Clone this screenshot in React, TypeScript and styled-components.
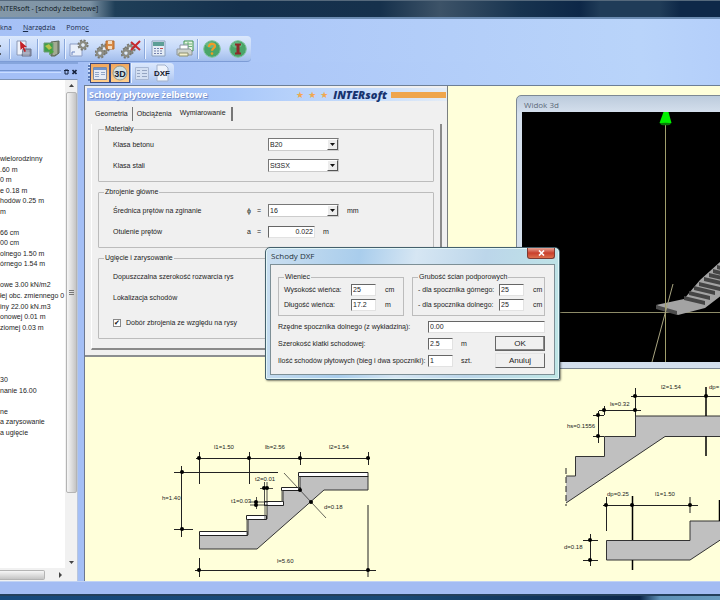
import React from "react";
import styled, { createGlobalStyle, css } from "styled-components";

const UI = `"Liberation Sans", Arial, sans-serif`;
const SEGOE = `"Open Sans", "Noto Sans", sans-serif`;

const GlobalStyle = createGlobalStyle`
  * { box-sizing: border-box; }
  body { margin: 0; overflow: hidden; }
  button, input, select, fieldset, legend { font: inherit; color: inherit; }
`;

const Page = styled.div`
  display: flex;
  flex-direction: column;
  height: 100vh;
  overflow: hidden;
  background: #a4bff6;
  color: #1c1c1c;
  font: 7px/10px ${UI};
  white-space: nowrap;
`;

const TitleBar = styled.header`
  flex: none;
  height: 19px;
  padding-top: 2px;
  border-top: 1px solid #55697c;
  border-bottom: 2px solid #6c8cb2;
  background: linear-gradient(90deg, #8498a8 0, #7d93a5 90px, #1f3f58 115px, #14304d 240px, #16314c 380px, #3d5368 440px, #17334f 520px, #0d2747 580px, #203c58 600px, #203c58 660px, #0e2848 680px);
  font: 7px/12px ${SEGOE};
  color: #0c1620;
`;

const Chrome = styled.div`
  flex: none;
  background: linear-gradient(90deg, #a6c1f6 0, #adc8f8 260px, #b9d4fa 640px, #b4cffa);
`;

const MenuBar = styled.nav`
  display: flex;
  gap: 11px;
  height: 17px;
  font: 7px/16px ${SEGOE};
  color: #1a2a48;
`;

const MenuItem = styled.button`
  padding: 0;
  border: 0;
  background: none;
`;

const ToolBar = styled.div`
  display: flex;
  align-items: center;
  width: 251px;
  height: 26px;
  border-radius: 0 4px 4px 0;
  border-bottom: 1px solid #7d9cd6;
  background: linear-gradient(#dbe8fc, #c6d9f9 50%, #a2bdec);
`;

const ToolButton = styled.button`
  display: flex;
  justify-content: center;
  width: 26px;
  padding: 0;
  border: 0;
  background: none;
`;

const ToolSep = styled.span`
  width: 2px;
  height: 20px;
  border-left: 1px solid #8aa8dc;
  border-right: 1px solid #eaf2ff;
`;

const Body = styled.div`
  flex: 1;
  display: flex;
  min-height: 0;
`;

const SidePanel = styled.aside`
  flex: none;
  display: flex;
  flex-direction: column;
  width: 78px;
  border-top: 2px solid #86a5dc;
  overflow: hidden;
`;

const SideHeader = styled.div`
  display: flex;
  align-items: center;
  gap: 3px;
  height: 15px;
`;

const SideRule = styled.span`
  width: 61px;
  height: 3px;
  border-top: 1px solid #7393cf;
  border-bottom: 1px solid #c8dcff;
`;

const SideButton = styled.button`
  display: flex;
  padding: 0;
  border: 0;
  background: none;
`;

const TreeArea = styled.div`
  flex: 1;
  display: grid;
  grid-template-columns: 65px 12px;
  grid-template-rows: 1fr 13px;
  min-height: 0;
  background: #fff;
  border-right: 1px solid #b9c6dc;
  border-top: 1px solid #7f93b4;
`;

const Tree = styled.ul`
  display: grid;
  grid-auto-rows: 1fr;
  align-items: center;
  height: 284px;
  margin: 74px 0 0;
  padding: 0;
  list-style: none;
`;

const VScroll = styled.div`
  display: flex;
  flex-direction: column;
  align-items: center;
  justify-content: space-between;
  background: #f1f1f1;
`;

const VThumb = styled.div`
  flex: 1;
  display: flex;
  align-items: center;
  justify-content: center;
  width: 11px;
  margin-bottom: 63px;
  border: 1px solid #b4b4b4;
  border-radius: 2px;
  background: linear-gradient(90deg, #f6f6f6, #dedede 50%, #c4c4c4);
`;

const HScroll = styled.div`
  grid-column: 1 / 3;
  display: flex;
  align-items: center;
  gap: 12px;
  background: #f1f1f1;
`;

const HThumb = styled.div`
  width: 45px;
  height: 10px;
  border: 1px solid #b4b4b4;
  border-left: 0;
  border-radius: 0 2px 2px 0;
  background: linear-gradient(#f6f6f6, #dedede 50%, #c4c4c4);
`;

const Main = styled.main`
  flex: 1;
  display: flex;
  flex-direction: column;
  min-width: 0;
  margin-left: 6px;
`;

const ViewBarRow = styled.div`
  flex: none;
  height: 23px;
  padding: 1px 0 0 4px;
  background: linear-gradient(90deg, #a6c1f6 0, #adc8f8 200px, #b9d4fa 560px, #b4cffa);
`;

const ViewBar = styled.div`
  display: flex;
  align-items: center;
  width: 86px;
  height: 20px;
  border-radius: 4px;
  background: linear-gradient(#dbe8fc, #c6d9f9 50%, #a9c2ee);
`;

const Grip = styled.span`
  width: 2px;
  height: 16px;
  border-left: 2px dotted #5c7cb8;
`;

const ViewButton = styled.button<{ $active?: boolean }>`
  display: flex;
  align-items: center;
  justify-content: center;
  width: 20px;
  height: 20px;
  padding: 0;
  border: 1px solid transparent;
  background: none;
  ${(p) =>
    p.$active &&
    css`
      border-color: #3c4a80;
      background: linear-gradient(#f2a75c, #ffcf8e);
    `}
`;

const Canvas = styled.div`
  position: relative;
  flex: 1;
  overflow: hidden;
  border-left: 1px solid #6c7890;
  border-top: 1px solid #6d7f96;
  background: #ffffda;
`;

const FormWindow = styled.section`
  position: absolute;
  left: 0;
  top: 0;
  width: 363px;
  padding: 2px 0 5px 2px;
  border-right: 1px solid #7a7f80;
  border-bottom: 2px solid #8b8e90;
  background: #f0f0f0;
`;

const Banner = styled.div`
  display: flex;
  align-items: center;
  height: 13px;
  padding-left: 2px;
  background: linear-gradient(90deg, #9db9f6, #a9c8fa 40%, #c9defb 80%, #e4ecf6);
`;

const BannerTitle = styled.h1`
  flex: 1;
  margin: 0;
  font: bold 9px/13px "Noto Sans", sans-serif;
  color: #fff;
  text-shadow: 1px 1px 1px #6a86c4;
`;

const Stars = styled.span`
  display: flex;
  gap: 4px;
  margin-right: 5px;
  font: 9px/12px "DejaVu Sans", sans-serif;
  color: #f0a850;
`;

const Brand = styled.strong`
  font: italic 800 11px/12px "Open Sans", sans-serif;
  color: #17336f;
`;

const BrandBar = styled.span`
  width: 55px;
  height: 6px;
  margin: 0 1px 0 4px;
  background: #efa54c;
`;

const Tabs = styled.div`
  display: flex;
  align-items: center;
  height: 23px;
  padding: 3px 0 0 8px;
`;

const Tab = styled.button<{ $kind: "divided" | "plain" | "active" }>`
  height: 14px;
  border: 0;
  background: none;
  line-height: 12px;
  ${(p) =>
    p.$kind === "divided"
      ? css`
          margin-right: 4px;
          padding: 0 4px 0 0;
          border-right: 1px solid #777;
        `
      : p.$kind === "active"
      ? css`
          padding: 0 5px 2px 8px;
          border-right: 2px solid #777;
        `
      : css`
          padding: 0;
        `}
`;

const TabPage = styled.form`
  display: flex;
  flex-direction: column;
  gap: 5px;
  width: 351px;
  margin-left: 4px;
  padding: 0 6px 9px;
  border-left: 1px solid #fff;
  border-right: 2px solid #8a8a8a;
  border-bottom: 2px solid #8a8a8a;
`;

const Group = styled.fieldset<{ $lead?: boolean }>`
  min-width: 0;
  margin: 0;
  padding: ${(p) => (p.$lead ? "3px" : "0")} 5px 5px;
  border: 1px solid #bcbcbc;
  border-radius: 1px;
`;

const GroupTitle = styled.legend`
  padding: 0 1px;
  line-height: 10px;
`;

const Row = styled.div`
  display: grid;
  grid-template-columns: 134px 10px 11px auto 1fr;
  align-items: center;
  height: 21px;
  padding-left: 9px;
`;

const SelectBox = styled.span`
  display: flex;
  align-items: center;
  width: 71px;
  height: 13px;
  border: 1px solid #777;
  border-right-color: #ccc;
  border-bottom-color: #ccc;
  background: #fff;
`;

const Select = styled.select`
  flex: 1;
  height: 11px;
  padding: 0 1px;
  border: 0;
  appearance: none;
  background: transparent;
  line-height: 11px;
`;

const DropArrow = styled.svg`
  width: 11px;
  height: 11px;
  border: 1px solid;
  border-color: #fff #555 #555 #fff;
  background: #ececec;
`;

const Input = styled.input<{ $w?: string; $right?: boolean }>`
  width: ${(p) => p.$w || "25px"};
  height: 12px;
  padding: 0 1px;
  border: 1px solid #e2e2e2;
  border-top-color: #666;
  border-left-color: #666;
  border-radius: 0;
  background: #fff;
  line-height: 10px;
  text-align: ${(p) => (p.$right ? "right" : "left")};
`;

const Unit = styled.span`
  padding-left: 8px;
`;

const CheckRow = styled.label`
  display: flex;
  align-items: center;
  gap: 5px;
  height: 21px;
  margin-top: 4px;
  padding-left: 9px;
`;

const Check = styled.input`
  display: flex;
  align-items: center;
  justify-content: center;
  appearance: none;
  width: 8px;
  height: 8px;
  margin: 0;
  border: 1px solid #888;
  background: #fff;
  &:checked::before {
    content: "✔";
    font: 7px/6px "DejaVu Sans", sans-serif;
    color: #111;
  }
`;

const ViewWindow = styled.section`
  position: absolute;
  left: 431px;
  right: -8px;
  top: 9px;
  padding: 0 5px 6px;
  border: 1px solid #7c8894;
  border-radius: 5px 5px 0 0;
  background: linear-gradient(#bccbdc, #d6e1ee 18px, #d3dfec);
`;

const ViewTitle = styled.h2`
  margin: 0;
  padding: 1px 0 0 2px;
  font: 8px/15px ${SEGOE};
  color: #5c6a78;
`;

const Scene = styled.svg`
  display: block;
  width: 100%;
  height: 250px;
  background: #000;
`;

const Dialog = styled.section`
  position: absolute;
  left: 180px;
  top: 161px;
  width: 295px;
  padding: 0 4px 4px;
  border: 1px solid #44606c;
  border-radius: 5px 5px 2px 2px;
  background: linear-gradient(100deg, #cbdff0 0, #a9cdec 30%, #d6e6f3 48%, #bcd6ea 70%, #bfe6e6);
  box-shadow: 1px 1px 2px rgba(0, 0, 0, 0.5), inset 0 0 0 1px #e2f6f8;
`;

const DialogTitle = styled.header`
  display: flex;
  align-items: flex-start;
  justify-content: space-between;
  height: 16px;
`;

const DialogName = styled.h2`
  margin: 0;
  padding-left: 1px;
  font: 8px/16px ${SEGOE};
  color: #26323c;
`;

const Close = styled.button`
  display: flex;
  align-items: center;
  justify-content: center;
  width: 28px;
  height: 11px;
  padding: 0;
  border: 1px solid #7c3a32;
  border-top: 0;
  border-radius: 0 0 3px 3px;
  background: linear-gradient(#e9a596, #c9402c 50%, #dd6f4c);
`;

const DialogBody = styled.form`
  padding: 7px 9px 5px 7px;
  border: 1px solid #7d8f96;
  background: #f0f0f0;
`;

const Groups = styled.div`
  display: grid;
  grid-template-columns: 126px 1fr;
  gap: 8px;
`;

const DGroup = styled.fieldset`
  min-width: 0;
  margin: 0;
  padding: 0 5px 3px;
  border: 1px solid #bcbcbc;
`;

const DRow = styled.div<{ $label: string }>`
  display: grid;
  grid-template-columns: ${(p) => p.$label} 26px auto;
  align-items: center;
  height: 15px;
`;

const Bottom = styled.div`
  display: grid;
  grid-template-columns: 150px 25px 1fr 50px;
  grid-auto-rows: 17px;
  align-items: center;
  margin-top: 2px;
`;

const Wide = styled.div`
  grid-column: 2 / 5;
  display: flex;
`;

const Push = styled.button<{ $default?: boolean }>`
  height: 15px;
  padding: 0;
  border: 1px solid;
  border-color: ${(p) => (p.$default ? "#666" : "#e4e4e4 #666 #666 #e4e4e4")};
  border-radius: 0;
  background: #f0f0f0;
  box-shadow: ${(p) => (p.$default ? "inset -1px -1px 0 #888" : "none")};
  font-size: 8px;
  line-height: 12px;
`;

const Drawing = styled.svg<{ $x: number; $y: number }>`
  position: absolute;
  left: ${(p) => p.$x}px;
  top: ${(p) => p.$y}px;
  font: 6px "Liberation Sans", sans-serif;
`;

const StatusBar = styled.footer`
  flex: none;
  height: 13px;
  border-top: 1px solid #c2d3f4;
  background: #a3bcf3;
`;

const Desktop = styled.div`
  flex: none;
  height: 6px;
  border-top: 2px solid #24405c;
  background: linear-gradient(90deg, #17497c 0, #1a4a76 400px, #0c2749 640px, #5f92b8 660px, #6a9cc0);
`;

const treeLines = [
  "wielorodzinny", ".60 m", "0 m", "e 0.18 m", "hodów 0.25 m", "m", "",
  "66 cm", "00 cm", "olnego 1.50 m", "órnego 1.54 m", "",
  "owe 3.00 kN/m2", "łej obc. zmiennego 0", "iny 22.00 kN.m3", "onowej 0.01 m",
  "ziomej 0.03 m", "", "", "", "", "30", "nanie 16.00", "", "ne", "a zarysowanie", "a ugięcie",
];

function Gear({ x, y }: { x: number; y: number }) {
  return (
    <g transform={`translate(${x} ${y})`}>
      <circle r="4.4" fill="none" stroke="#77776f" strokeWidth="2.4" strokeDasharray="2 1.45" />
      <circle r="3" fill="none" stroke="#8c8c82" strokeWidth="2.4" />
      <circle r="1.4" fill="#e6ecf2" />
    </g>
  );
}

function ToolIcon({ name }: { name: string }) {
  return (
    <svg width="20" height="20" viewBox="0 0 20 20">
      {name === "select" && (
        <g>
          <path d="M3 2h9v14H3z" fill="#eef2fa" stroke="#8b98b4" />
          <path d="M9 10h8v7H8z" fill="#8d93a6" stroke="#6a7088" />
          <path d="M10 11v6M12 11v6M14 11v6M8 14h8" stroke="#c9cedb" strokeWidth=".6" />
          <path d="M6 2l7 6-3 .3 2 4-1.600.8-1.700-4L6.500 11z" fill="#c32027" />
        </g>
      )}
      {name === "book" && (
        <g>
          <path d="M9 3l8-1v12l-4 3H9z" fill="#7f8a76" stroke="#5b6656" />
          <path d="M14 3v12M12 3v13" stroke="#c8ccb0" />
          <path d="M2 4h9v9H2z" fill="#3fa04a" stroke="#6f9a74" />
          <path d="M3 7l4-2 3 4-3 2z" fill="#b9c24a" />
          <path d="M8 10l4 3-5 3z" fill="#4aa53f" />
        </g>
      )}
      {name === "new" && (
        <g>
          <path d="M1 5h9l3 3v9H1z" fill="#e9effa" stroke="#8b9cc4" />
          <path d="M3 16v-3h3" fill="none" stroke="#6b84c0" />
          <Gear x={14} y={6} />
        </g>
      )}
      {name === "save" && (
        <g>
          <Gear x={9} y={10} />
          <Gear x={5} y={14} />
          <path d="M11 2h8v8h-8z" fill="#d98a45" stroke="#b46a2c" />
          <path d="M13 2h4v3h-4zM13 7h4v3h-4z" fill="#f4dcc0" />
        </g>
      )}
      {name === "delete" && (
        <g>
          <Gear x={9} y={10} />
          <Gear x={5} y={14} />
          <path d="M10 3l9 8M19 2l-9 9" stroke="#c62a2e" strokeWidth="2" />
        </g>
      )}
      {name === "calc" && (
        <g>
          <path d="M3 2h13v15H3z" fill="#e4ecf6" stroke="#8ba0bc" />
          <path d="M4 3h11v4H4z" fill="#5d9e96" />
          <path d="M5 9.500h9M5 12h9M5 14.500h9" stroke="#7381ad" strokeDasharray="2 1" />
          <path d="M11 9.500h3" stroke="#c05050" />
        </g>
      )}
      {name === "print" && (
        <g>
          <path d="M9 2h9v10H9z" fill="#e8f4e6" stroke="#3f9450" />
          <path d="M10 5h7M10 7.500h7M13 3v8" stroke="#4ca35c" strokeWidth=".8" />
          <path d="M5 6h8v5H5z" fill="#fff" stroke="#8a94a4" />
          <path d="M2 10h13l2 2v4H2z" fill="#cdd2cc" stroke="#8d9599" />
          <path d="M4 14h9v3H4z" fill="#f4f0cc" stroke="#8d9070" />
        </g>
      )}
      {(name === "help" || name === "info") && (
        <g>
          <circle cx="10" cy="10" r="8.300" fill="#4aa56a" stroke="#7fc49a" />
          <ellipse cx="9" cy="6" rx="5" ry="3" fill="#7cc795" opacity=".6" />
          {name === "help" ? (
            <g>
              <path d="M7 8c0-4 6-4 6-.8 0 2-3 2-3 4.600" fill="none" stroke="#f09a26" strokeWidth="2.200" />
              <circle cx="10" cy="14.600" r="1.300" fill="#f09a26" />
            </g>
          ) : (
            <path d="M7 4.500h6v2h-1.500v7H13v2H7v-2h1.500v-7H7z" fill="#8d2a2a" />
          )}
        </g>
      )}
    </svg>
  );
}

const tools = ["|", "select", "|", "book", "|", "new", "save", "delete", "|", "calc", "print", "|", "help", "info"];

function Arrow({ d }: { d: string }) {
  return (
    <svg width="7" height="12" viewBox="0 0 7 12">
      <path d={d} fill="#444" />
    </svg>
  );
}

function Combo({ id, value }: { id: string; value: string }) {
  return (
    <SelectBox>
      <Select id={id} defaultValue={value}>
        <option>{value}</option>
      </Select>
      <DropArrow viewBox="0 0 9 9" aria-hidden="true">
        <path d="M2 3h5L4.500 6z" fill="#111" />
      </DropArrow>
    </SelectBox>
  );
}

function Dots({ points }: { points: number[][] }) {
  return (
    <g fill="#000" stroke="none">
      {points.map(([x, y]) => (
        <circle key={`${x}-${y}`} cx={x} cy={y} r="2" />
      ))}
    </g>
  );
}

function StairSection() {
  return (
    <Drawing $x={75} $y={354} width="220" height="145" viewBox="160 440 220 145">
      <path d="M199.500 535H248V519H267V505H283V490H300V476H368V490H324L257 549H199.500z" fill="#c0c0c0" stroke="#333" />
      <path
        d="M199.500 531.500H247.500V535.500H199.500zM246.500 515.500H266.500V519.500H246.500zM264.500 501.500H283.500V505.500H264.500zM281.500 487.500H300.500V490.500H281.500zM298.500 472.500H368V476.500H298.500z"
        fill="#fff"
        stroke="#222"
      />
      <path d="M247 519V535M265 505V519M282 490V502M298.500 476V488" stroke="#555" fill="none" />
      <g stroke="#222" fill="none">
        <path d="M196 458.500H370M199.500 452V484M249.500 452V484M300.500 452V465M368.500 452V465" />
        <path d="M181.500 466V537M174 472.500H278M174 529.500H193" />
        <path d="M264.500 482V506M267 482V506M260 488.500H273M250 502H268M250 505H268M256.500 497V509" strokeWidth=".8" />
        <path d="M284 473L326 518" strokeWidth=".7" />
        <path d="M195 570.500H376M199.500 558V577M368 505V577" />
      </g>
      <Dots points={[[199, 458], [249, 458], [300, 458], [368, 458], [182, 472], [182, 529], [264, 488], [267, 488], [256, 502], [256, 505], [300, 490], [311, 502], [199, 570], [368, 570]]} />
      <g fill="#222">
        <text x="214" y="449">l1=1.50</text>
        <text x="265" y="449">lb=2.56</text>
        <text x="329" y="449">l2=1.54</text>
        <text x="162" y="500">h=1.40</text>
        <text x="255" y="481">t2=0.01</text>
        <text x="231" y="503">t1=0.03</text>
        <text x="324" y="509">d=0.18</text>
        <text x="277" y="563">l=5.60</text>
      </g>
    </Drawing>
  );
}

function StairDetails() {
  return (
    <Drawing $x={475} $y={294} width="190" height="200" viewBox="560 380 190 200">
      <path d="M566 503V476H575V456.500H605V436.500H635.500V416H752V436.500H665z" fill="#c0c0c0" />
      <path d="M566 476H575.500V456.500H604.500V436.500H635.500V416H752M752 436.500H665L566 503" fill="none" stroke="#333" />
      <path d="M566 468V506" stroke="#222" strokeDasharray="6 3" />
      <path d="M606.500 540.500H690V521H752V519L690 560H606.500z" fill="#c0c0c0" stroke="#333" />
      <g stroke="#222" fill="none">
        <path d="M631 396.500H752M635.500 388V416M599 410.500H641M604.500 406V415M598.500 411V443M593 415.500H604M593 436.500H604" />
        <path d="M603 505.500H698M606.500 497V531M690 497V513M590.500 534V566M583 540.500H598M583 560.500H598" />
      </g>
      <path d="M706 387V416M706 436V456M632.500 496V540M632.500 560V570M719.500 500V521" stroke="#000" strokeWidth="1.500" />
      <Dots points={[[635, 396], [706, 396], [604, 410], [635, 410], [598, 415], [598, 436], [606, 505], [632, 505], [690, 505], [590, 540], [590, 560]]} />
      <g fill="#222">
        <text x="661" y="389">l2=1.54</text>
        <text x="709" y="389">dp=</text>
        <text x="610" y="406">ls=0.32</text>
        <text x="567" y="428">hs=0.1556</text>
        <text x="607" y="496">dp=0.25</text>
        <text x="655" y="496">l1=1.50</text>
        <text x="564" y="549">d=0.18</text>
      </g>
    </Drawing>
  );
}

const steps = [[684, 296], [689, 291], [694, 286], [699, 282], [704, 277], [709, 273], [713, 269], [717, 265]];

function Scene3d() {
  return (
    <Scene viewBox="522 112 206 250" preserveAspectRatio="xMinYMin slice" aria-label="Widok 3d">
      <path d="M522 312.500H740" stroke="#8d8b68" />
      <path d="M656 305L684 299 700 280 740 244V281L705 308 678 315z" fill="#a3a3a3" />
      <path d="M656 305L677 311V315L656 309z" fill="#4c4c4c" />
      {steps.map(([x, y]) => (
        <path key={x} d={`M${x} ${y}l21 5v4l-21-5z`} fill="#454545" />
      ))}
      <path d="M665.500 124V362" stroke="#a09e6c" />
      <path d="M673 284L652 362" stroke="#a8a480" />
      <path d="M663.500 112h5l3 11q-6 3-12 0z" fill="#00f000" />
      <ellipse cx="665.500" cy="124" rx="5" ry="1.300" fill="#087a08" />
    </Scene>
  );
}

export default function App() {
  return (
    <Page>
      <GlobalStyle />
      <TitleBar>NTERsoft - [schody żelbetowe]</TitleBar>
      <Chrome>
        <MenuBar>
          <MenuItem>kna</MenuItem>
          <MenuItem><u>N</u>arzędzia</MenuItem>
          <MenuItem>Pomo<u>c</u></MenuItem>
        </MenuBar>
        <ToolBar>
          <svg width="9" height="20" viewBox="0 0 9 20"><path d="M0 7h1M0 15h1" stroke="#333" strokeWidth="1.500" /></svg>
          {tools.map((t, i) =>
            t === "|" ? <ToolSep key={i} /> : <ToolButton key={i} aria-label={t}><ToolIcon name={t} /></ToolButton>
          )}
        </ToolBar>
      </Chrome>
      <Body>
        <SidePanel>
          <SideHeader>
            <SideRule />
            <SideButton aria-label="pin">
              <svg width="5" height="6" viewBox="0 0 5 6"><path d="M1 1h3v4H1zM0 1.500h5" fill="none" stroke="#16223c" /></svg>
            </SideButton>
            <SideButton aria-label="close">
              <svg width="5" height="6" viewBox="0 0 5 6"><path d="M.5 1l4 4M4.500 1l-4 4" stroke="#16223c" strokeWidth="1.600" /></svg>
            </SideButton>
          </SideHeader>
          <TreeArea>
            <Tree>
              {treeLines.map((t, i) => <li key={i}>{t}</li>)}
            </Tree>
            <VScroll>
              <Arrow d="M1 7h5L3.500 4z" />
              <VThumb>
                <svg width="5" height="6" viewBox="0 0 5 6"><path d="M0 .5h5M0 2.500h5M0 4.500h5" stroke="#777" /></svg>
              </VThumb>
              <Arrow d="M1 5h5L3.500 8z" />
            </VScroll>
            <HScroll>
              <HThumb />
              <Arrow d="M2 3v6l3-3z" />
            </HScroll>
          </TreeArea>
        </SidePanel>
        <Main>
          <ViewBarRow>
            <ViewBar>
              <Grip />
              <ViewButton $active aria-label="form">
                <svg width="14" height="13" viewBox="0 0 14 13"><path d="M.5.500h13v12H.500z" fill="#e4ebf6" stroke="#7d8aa4" /><path d="M1 1h12v2H1z" fill="#6f93cc" /><path d="M2 5.500h4M2 7.500h4M2 9.500h4M8 5.500h4M8 7.500h4" stroke="#93a7c8" /></svg>
              </ViewButton>
              <ViewButton $active aria-label="3D">
                <svg width="16" height="16" viewBox="0 0 16 16"><circle cx="8" cy="8" r="7" fill="#cfe0e4" stroke="#9a9a88" /><text x="8" y="11.500" textAnchor="middle" fontFamily="Liberation Sans" fontWeight="bold" fontSize="9" fill="#1a2433">3D</text></svg>
              </ViewButton>
              <ToolSep />
              <ViewButton aria-label="list">
                <svg width="14" height="13" viewBox="0 0 14 13"><path d="M.5.500h13v12H.500z" fill="#d3dff2" stroke="#a8b8d4" /><path d="M2 3.500h3M7 3.500h5M2 6.500h3M7 6.500h5M2 9.500h3M7 9.500h5" stroke="#95a5c2" /></svg>
              </ViewButton>
              <ViewButton aria-label="DXF">
                <svg width="18" height="18" viewBox="0 0 18 18"><path d="M4 1h8l3 3v13H4z" fill="#eef3fb" stroke="#a3b2cc" /><text x="9" y="12" textAnchor="middle" fontFamily="Liberation Sans" fontWeight="bold" fontSize="8" fill="#16202e">DXF</text></svg>
              </ViewButton>
            </ViewBar>
          </ViewBarRow>
          <Canvas>
            <StairSection />
            <StairDetails />
            <FormWindow>
              <Banner>
                <BannerTitle>Schody płytowe żelbetowe</BannerTitle>
                <Stars><span>★</span><span>★</span><span>★</span></Stars>
                <Brand>INTERsoft</Brand>
                <BrandBar />
              </Banner>
              <Tabs role="tablist">
                <Tab type="button" role="tab" $kind="divided">Geometria</Tab>
                <Tab type="button" role="tab" $kind="plain">Obciążenia</Tab>
                <Tab type="button" role="tab" $kind="active" aria-selected>Wymiarowanie</Tab>
              </Tabs>
              <TabPage>
                <Group>
                  <GroupTitle>Materiały</GroupTitle>
                  <Row>
                    <label htmlFor="concrete">Klasa betonu</label><span /><span />
                    <Combo id="concrete" value="B20" />
                  </Row>
                  <Row>
                    <label htmlFor="steel">Klasa stali</label><span /><span />
                    <Combo id="steel" value="St3SX" />
                  </Row>
                </Group>
                <Group $lead>
                  <GroupTitle>Zbrojenie główne</GroupTitle>
                  <Row>
                    <label htmlFor="bar">Średnica prętów na zginanie</label><span>ϕ</span><span>=</span>
                    <Combo id="bar" value="16" />
                    <Unit>mm</Unit>
                  </Row>
                  <Row>
                    <label htmlFor="cover">Otulenie prętów</label><span>a</span><span>=</span>
                    <Input id="cover" $w="47px" $right defaultValue="0.022" />
                    <Unit>m</Unit>
                  </Row>
                </Group>
                <Group $lead>
                  <GroupTitle>Ugięcie i zarysowanie</GroupTitle>
                  <Row><span>Dopuszczalna szerokość rozwarcia rys</span></Row>
                  <Row><span>Lokalizacja schodów</span></Row>
                  <CheckRow>
                    <Check type="checkbox" defaultChecked />
                    Dobór zbrojenia ze względu na rysy
                  </CheckRow>
                </Group>
              </TabPage>
            </FormWindow>
            <ViewWindow>
              <ViewTitle>Widok 3d</ViewTitle>
              <Scene3d />
            </ViewWindow>
            <Dialog role="dialog" aria-label="Schody DXF">
              <DialogTitle>
                <DialogName>Schody DXF</DialogName>
                <Close aria-label="close">
                  <svg width="7" height="6" viewBox="0 0 7 6"><path d="M1 .5l5 5M6 .5l-5 5" stroke="#fff" strokeWidth="1.600" /></svg>
                </Close>
              </DialogTitle>
              <DialogBody>
                <Groups>
                  <DGroup>
                    <GroupTitle>Wieniec</GroupTitle>
                    <DRow $label="67px">
                      <label htmlFor="rh">Wysokość wieńca:</label><Input id="rh" defaultValue="25" /><Unit>cm</Unit>
                    </DRow>
                    <DRow $label="67px">
                      <label htmlFor="rl">Długość wieńca:</label><Input id="rl" defaultValue="17.2" /><Unit>m</Unit>
                    </DRow>
                  </DGroup>
                  <DGroup>
                    <GroupTitle>Grubość ścian podporowych</GroupTitle>
                    <DRow $label="81px">
                      <label htmlFor="wt">- dla spocznika górnego:</label><Input id="wt" defaultValue="25" /><Unit>cm</Unit>
                    </DRow>
                    <DRow $label="81px">
                      <label htmlFor="wb">- dla spocznika dolnego:</label><Input id="wb" defaultValue="25" /><Unit>cm</Unit>
                    </DRow>
                  </DGroup>
                </Groups>
                <Bottom>
                  <label htmlFor="lv">Rzędne spocznika dolnego (z wykładziną):</label>
                  <Wide><Input id="lv" $w="100%" defaultValue="0.00" /></Wide>
                  <label htmlFor="cw">Szerokość klatki schodowej:</label>
                  <Input id="cw" defaultValue="2.5" /><Unit>m</Unit>
                  <Push type="button" $default>OK</Push>
                  <label htmlFor="ct">Ilość schodów płytowych (bieg i dwa spoczniki):</label>
                  <Input id="ct" defaultValue="1" /><Unit>szt.</Unit>
                  <Push type="button">Anuluj</Push>
                </Bottom>
              </DialogBody>
            </Dialog>
          </Canvas>
        </Main>
      </Body>
      <StatusBar />
      <Desktop />
    </Page>
  );
}
